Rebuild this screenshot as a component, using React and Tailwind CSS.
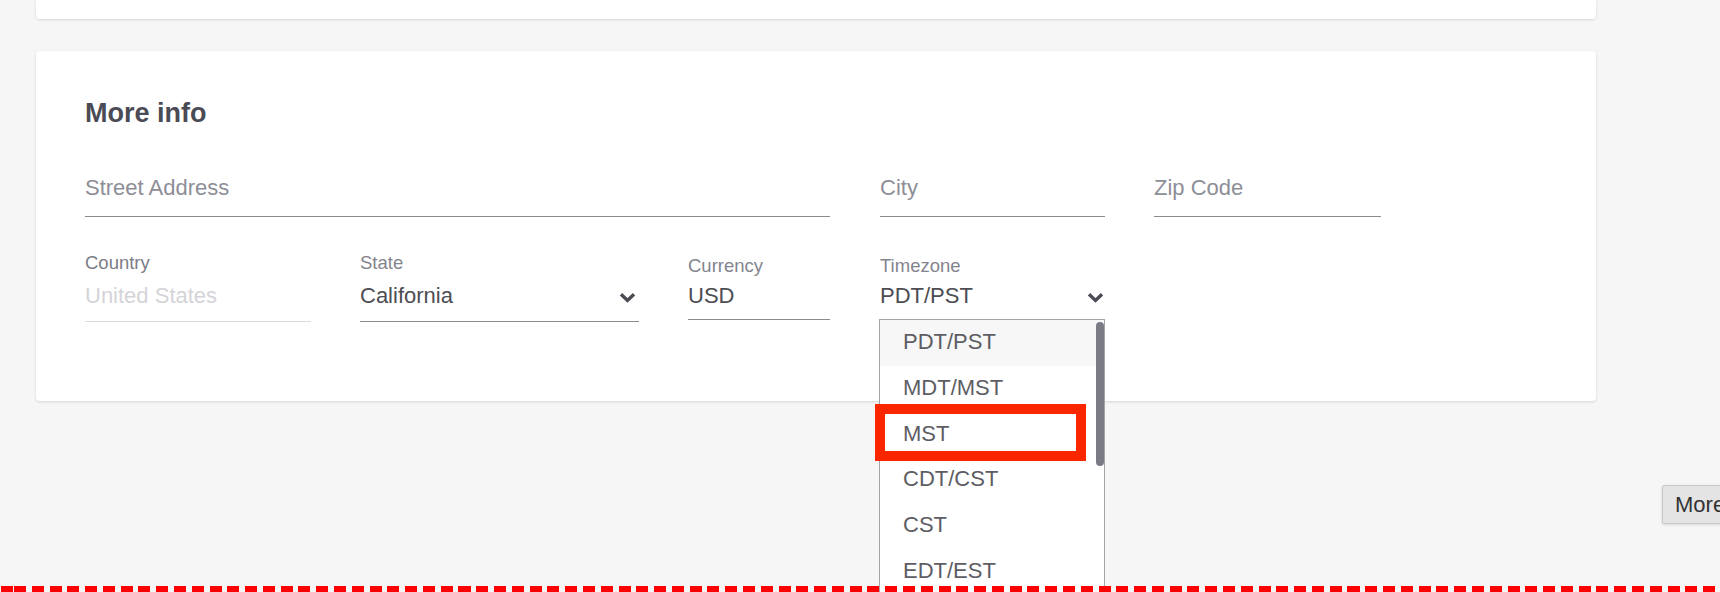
import React from "react";

function Chevron() {
  return (
    <svg width="17" height="11" viewBox="0 0 17 11" className="block">
      <path d="M2 2.2 L8.5 8.4 L15 2.2" fill="none" stroke="#4a4b55" strokeWidth="3.4" strokeLinejoin="miter" strokeLinecap="butt" />
    </svg>
  );
}

function LineField({ width, ml, text }) {
  return (
    <div className={`${width} ${ml} border-b border-[#8c8c90] pb-[14px]`}>
      <div className="text-[22px] leading-[28px] text-[#8e8e98]">{text}</div>
    </div>
  );
}

export default function App() {
  const zones = ["PDT/PST", "MDT/MST", "MST", "CDT/CST", "CST", "EDT/EST", "AKDT/AKST"];
  return (
    <div className="relative w-[1720px] h-[592px] overflow-hidden bg-[#f6f6f6] font-['Liberation_Sans',Arial,sans-serif]">
      <div className="pl-[36px] pr-[124px]">
        <div className="h-[19px] bg-white rounded-b-[4px] shadow-[0_1px_3px_rgba(0,0,0,0.13)]"></div>
        <div className="mt-[32px] h-[350px] bg-white rounded-[4px] shadow-[0_1px_3px_rgba(0,0,0,0.13)] pt-[46px] pl-[49px]">
          <h2 className="text-[27px] leading-[32px] font-bold text-[#4a4b55]">More info</h2>

          <div className="mt-[45px] flex items-start">
            <LineField width="w-[745px]" ml="" text="Street Address" />
            <LineField width="w-[225px]" ml="ml-[50px]" text="City" />
            <LineField width="w-[227px]" ml="ml-[49px]" text="Zip Code" />
          </div>

          <div className="mt-[35px] flex items-start">
            <div className="w-[226px] border-b border-[#dcdcdf] pb-[11px]">
              <div className="text-[18.5px] leading-[22px] text-[#7c7c86]">Country</div>
              <div className="mt-[8px] text-[22px] leading-[28px] text-[#d4d4d8]">United States</div>
            </div>
            <div className="ml-[49px] w-[279px] border-b border-[#8c8c90] pb-[11px]">
              <div className="text-[18.5px] leading-[22px] text-[#84848e]">State</div>
              <div className="mt-[8px] flex items-center justify-between">
                <span className="text-[22px] leading-[28px] text-[#4d4d53]">California</span>
                <span className="mr-[3px] mt-[3px]"><Chevron /></span>
              </div>
            </div>
            <div className="ml-[49px] w-[142px] border-b border-[#8c8c90] pb-[9px]">
              <div className="mt-[3px] text-[18.5px] leading-[22px] text-[#84848e]">Currency</div>
              <div className="mt-[5px] text-[22px] leading-[28px] text-[#4d4d53]">USD</div>
            </div>
            <div className="ml-[50px] w-[225px] border-b border-[#8c8c90] pb-[9px]">
              <div className="mt-[3px] text-[18.5px] leading-[22px] text-[#84848e]">Timezone</div>
              <div className="mt-[5px] flex items-center justify-between">
                <span className="text-[22px] leading-[28px] text-[#4d4d53]">PDT/PST</span>
                <span className="mr-[1px] mt-[3px]"><Chevron /></span>
              </div>
            </div>
          </div>
        </div>
      </div>

      {/* open dropdown list */}
      <div className="absolute left-[879px] top-[319px] w-[226px] h-[300px] bg-white border border-[#a3a3a8] z-10">
        {zones.map((z, i) => (
          <div
            key={z}
            className={`h-[45.8px] leading-[44px] pl-[23px] text-[22px] text-[#5d5d63] ${i === 0 ? "bg-[#f7f7f7]" : ""}`}
          >
            {z}
          </div>
        ))}
        <div className="absolute right-0 top-[2px] w-[8px] h-[144px] rounded-full bg-[#7b7b86]"></div>
      </div>

      {/* red highlight box */}
      <div className="absolute left-[875px] top-[404px] w-[211px] h-[57px] border-[10px] border-[#fa2600] z-20"></div>

      {/* floating More button */}
      <div className="absolute left-[1662px] top-[485px] h-[39px] w-[90px] bg-[#e4e4e4] border border-[#c9c9c9] rounded-[2px] shadow-[0_1px_3px_rgba(0,0,0,0.12)] pl-[12px] leading-[37px] text-[22px] text-[#333] z-20">
        More
      </div>

      {/* red dashed bottom line */}
      <div className="absolute left-0 right-0 top-[586px] h-[6px] bg-[repeating-linear-gradient(90deg,#f00_0_12px,transparent_12px_17.78px)] bg-[position:14px_0] z-30"></div>
    </div>
  );
}
